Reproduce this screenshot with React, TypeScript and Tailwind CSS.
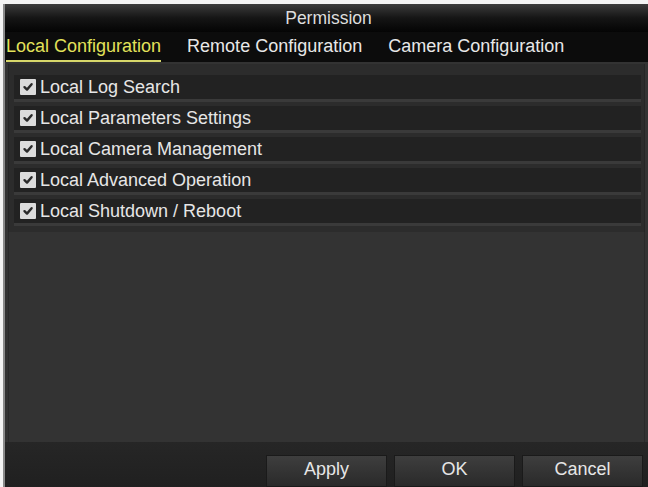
import React from "react";

const items = [
  "Local Log Search",
  "Local Parameters Settings",
  "Local Camera Management",
  "Local Advanced Operation",
  "Local Shutdown / Reboot",
];

function Check() {
  return (
    <span className="flex h-[16px] w-[16px] shrink-0 items-center justify-center rounded-[1px] bg-[#dcdcdc]">
      <svg width="12" height="12" viewBox="0 0 12 12">
        <path d="M2.5 6.2 L5 8.6 L9.6 3.2" fill="none" stroke="#2a2a2a" strokeWidth="2.4" strokeLinecap="round" strokeLinejoin="round" />
      </svg>
    </span>
  );
}

function Btn({ label }: { label: string }) {
  return (
    <div className="flex h-[32px] w-[121px] items-center justify-center border border-[#1a1a1a] bg-gradient-to-b from-[#3e3e3e] to-[#2a2a2a] pb-[3px] text-[18px] text-[#e6e6e6]">
      {label}
    </div>
  );
}

export default function App() {
  return (
    <div
      className="h-[487px] w-[648px] overflow-hidden bg-[#f4f4f4] pl-[3px] pt-[4px]"
      style={{ fontFamily: '"Liberation Sans", Arial, sans-serif' }}
    >
      <div className="flex h-[483px] w-[645px] flex-col border-l-2 border-[#8a8a8a] bg-[#2b2b2b]">
        <div className="flex h-[28px] items-center justify-center bg-gradient-to-b from-[#3d3d3d] via-[#151515] to-[#050505] pl-[4px] text-[17.5px] text-[#dedede]">
          Permission
        </div>
        <div className="flex h-[30px] items-end gap-[26px] bg-[#0c0c0c] pl-[1px]">
          <div className="border-b-2 border-[#d8d86a] pb-[4px] text-[18px] leading-[20px] text-[#e2e25a]">
            Local Configuration
          </div>
          <div className="pb-[6px] text-[18px] leading-[20px] text-[#e8e8e8]">Remote Configuration</div>
          <div className="pb-[6px] text-[18px] leading-[20px] text-[#e8e8e8]">Camera Configuration</div>
        </div>
        <div className="flex flex-1 flex-col bg-[#333333] px-[3px] pt-[2px]">
          <div className="flex flex-col gap-[4px] border-x border-[#262626] bg-[#2c2c2c] pb-[6px] pl-[5px] pr-[3px] pt-[11px]">
            {items.map((t) => (
              <div
                key={t}
                className="flex h-[27px] items-center gap-[4px] border-b-[3px] border-[#3a3a3a] bg-[#222222] pl-[6px] text-[18px] text-[#e6e6e6]"
              >
                <Check />
                <span className="leading-[20px]">{t}</span>
              </div>
            ))}
          </div>
          <div className="flex-1 border-x border-[#2a2a2a]" />
        </div>
        <div className="flex h-[45px] items-end justify-end gap-[7px] bg-gradient-to-b from-[#262626] to-[#202020] pr-[5px]">
          <Btn label="Apply" />
          <Btn label="OK" />
          <Btn label="Cancel" />
        </div>
      </div>
    </div>
  );
}
